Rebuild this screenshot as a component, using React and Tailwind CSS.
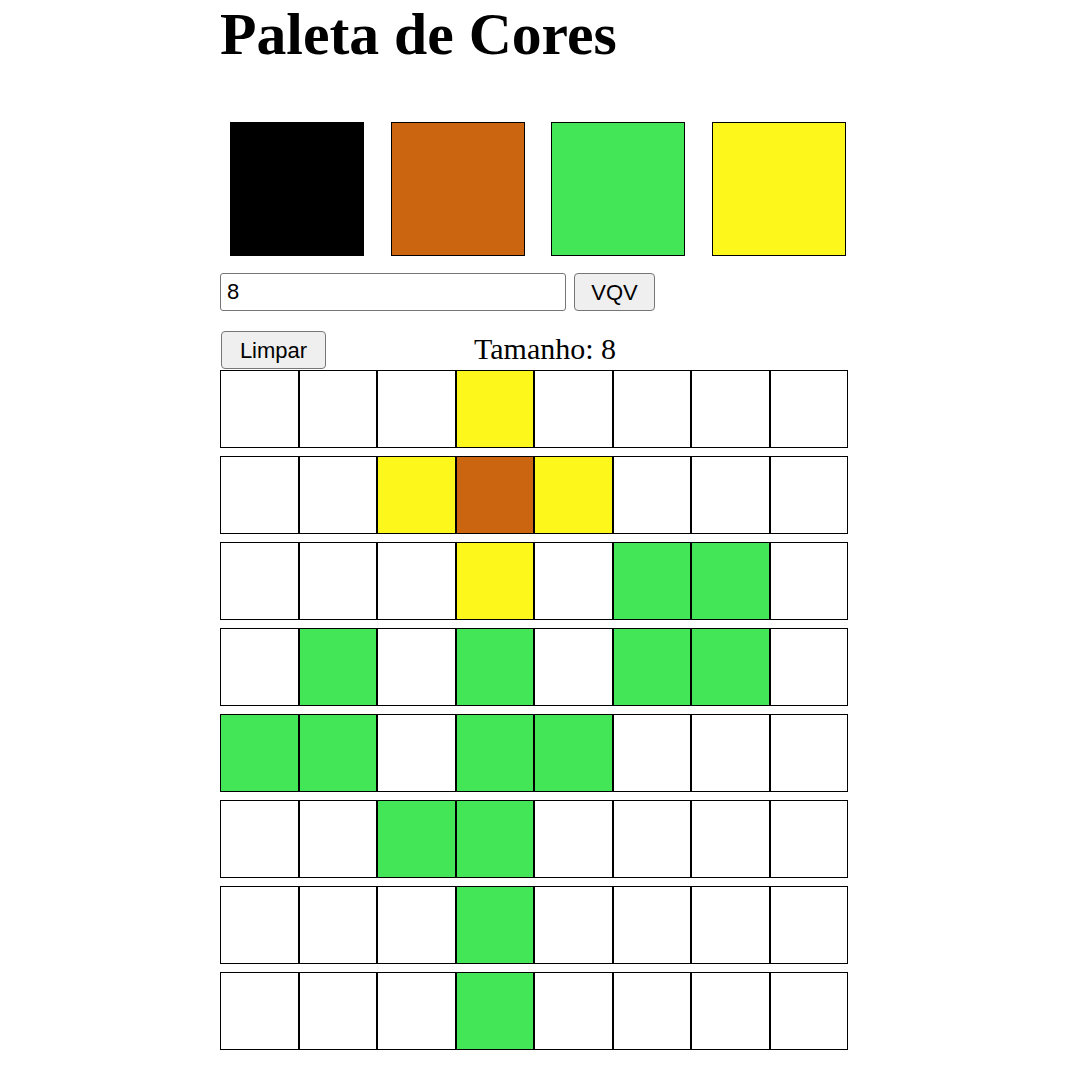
import React from "react";

const COLORS = {
  w: "bg-white",
  y: "bg-[#fdf71b]",
  o: "bg-[#cc650f]",
  g: "bg-[#42e657]",
};

const BOARD = [
  "wwwywwww",
  "wwyoywww",
  "wwwywggw",
  "wgwgwggw",
  "ggwggwww",
  "wwggwwww",
  "wwwgwwww",
  "wwwgwwww",
];

const PALETTE = ["bg-black", "bg-[#cc650f]", "bg-[#42e657]", "bg-[#fdf71b]"];

export default function App() {
  return (
    <div className="ml-[220px] w-[628px] bg-white text-black">
      <h1 className="text-[59.7px] leading-[69px] font-bold font-['Liberation_Serif',serif]">
        Paleta de Cores
      </h1>

      {/* paleta */}
      <div className="mt-[53px] ml-[10px] flex gap-[26.7px]">
        {PALETTE.map((c, i) => (
          <div key={i} className={`w-[134px] h-[134px] border border-black ${c}`} />
        ))}
      </div>

      <div className="mt-[17px] flex items-center gap-[8px] font-['Liberation_Sans',sans-serif]">
        <input
          defaultValue="8"
          className="w-[346px] h-[38px] border border-[#767676] rounded-[3px] px-[6px] text-[22px] outline-none"
        />
        <button className="h-[38px] w-[81px] bg-[#efefef] border border-[#767676] rounded-[4px] text-[22px]">
          VQV
        </button>
      </div>

      <div className="mt-[20px] h-[38px] flex items-end">
        <button className="ml-[1px] h-[38px] w-[105px] bg-[#efefef] border border-[#767676] rounded-[4px] text-[22px] font-['Liberation_Sans',sans-serif]">
          Limpar
        </button>
        <span className="ml-[148px] mb-[3px] text-[30px] leading-[35px] font-['Liberation_Serif',serif]">
          Tamanho: 8
        </span>
      </div>

      {/* quadro de pixels */}
      <div className="mt-[1px] flex flex-col gap-[8px]">
        {BOARD.map((row, r) => (
          <div key={r} className="flex">
            {row.split("").map((k, c) => (
              <div key={c} className={`flex-1 h-[78px] border border-black ${COLORS[k]}`} />
            ))}
          </div>
        ))}
      </div>
    </div>
  );
}
